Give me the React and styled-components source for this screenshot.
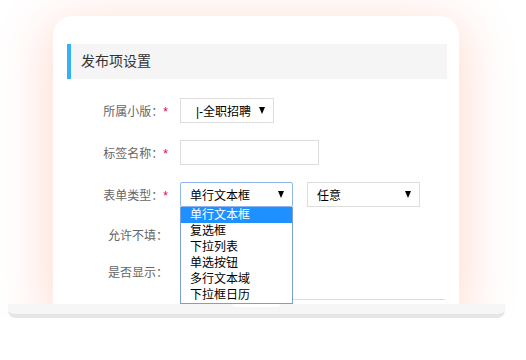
import React from "react";
import styled, { createGlobalStyle } from "styled-components";

const Global = createGlobalStyle`
  html, body {
    margin: 0;
    padding: 0;
    background: #fff;
  }
  body {
    font-family: "Liberation Sans", "Noto Sans CJK SC", sans-serif;
    font-size: 12px;
  }
`;

const types = ["单行文本框", "复选框", "下拉列表", "单选按钮", "多行文本域", "下拉框日历"];

function App() {
  return (
    <>
      <Global />
      <Stage>
        <Card>
          <SectionHeader>发布项设置</SectionHeader>
          <Form>
            <Row $top={18}>
              <Label>所属小版：<Star>*</Star></Label>
              <Select $w={94} $pad={15} $arrow={8}>
                <span>|-全职招聘</span>
                <Arrow />
              </Select>
            </Row>
            <Row $top={16}>
              <Label>标签名称：<Star>*</Star></Label>
              <Input />
            </Row>
            <Row $top={16}>
              <Label>表单类型：<Star>*</Star></Label>
              <SelectWrap>
                <Select $w={113} $pad={9} $arrow={8} $focus>
                  <span>单行文本框</span>
                  <Arrow />
                </Select>
                <DropList>
                  {types.map((t, i) => (
                    <Option key={t} $active={i === 0}>{t}</Option>
                  ))}
                </DropList>
              </SelectWrap>
              <Select $w={113} $pad={9} $arrow={8} $ml={14}>
                <span>任意</span>
                <Arrow />
              </Select>
            </Row>
            <Row $top={14}>
              <Label>允许不填：</Label>
            </Row>
            <Row $top={11}>
              <Label>是否显示：</Label>
            </Row>
            <Divider />
          </Form>
        </Card>
        <Base>
          <Notch />
        </Base>
      </Stage>
    </>
  );
}

export default App;

const Stage = styled.div`
  width: 497px;
  padding: 16px 0 0 8px;
`

const Card = styled.div`
  position: relative;
  margin-left: 45px;
  width: 406px;
  height: 288px;
  box-sizing: border-box;
  padding-top: 28px;
  background: #fff;
  border-radius: 20px 20px 0 0;
  overflow: hidden;
  box-shadow: 0 12px 50px 8px rgba(255, 100, 60, 0.22);
`

const SectionHeader = styled.div`
  margin: 0 12px 0 14px;
  height: 35px;
  line-height: 35px;
  padding-left: 10px;
  background: #f5f5f5;
  border-left: 4px solid #35b1f7;
  color: #333;
  font-size: 14px;
`

const Form = styled.div`
  display: flex;
  flex-direction: column;
`

const Row = styled.div`
  display: flex;
  align-items: center;
  height: 26px;
  margin-top: ${(p) => p.$top}px;
`

const Label = styled.div`
  width: 115px;
  text-align: right;
  color: #666;
  font-size: 12px;
  margin-right: 12px;
  white-space: nowrap;
`

const Star = styled.span`
  color: #e5004f;
`

const Select = styled.div`
  width: ${(p) => p.$w}px;
  height: 25px;
  box-sizing: border-box;
  margin-left: ${(p) => p.$ml || 0}px;
  display: flex;
  align-items: center;
  justify-content: space-between;
  padding: 0 ${(p) => p.$arrow}px 0 ${(p) => p.$pad}px;
  border: 1px solid ${(p) => (p.$focus ? "#8fb5ef" : "#ddd")};
  border-radius: ${(p) => (p.$focus ? "2px" : "0")};
  background: #fff;
  color: #000;
  font-size: 12px;
`

const Arrow = styled.span`
  width: 0;
  height: 0;
  border-left: 3.5px solid transparent;
  border-right: 3.5px solid transparent;
  border-top: 7px solid #000;
`

const Input = styled.div`
  width: 139px;
  height: 25px;
  box-sizing: border-box;
  border: 1px solid #ddd;
`

const SelectWrap = styled.div`
  position: relative;
`

const DropList = styled.div`
  position: absolute;
  top: 100%;
  left: 0;
  width: 113px;
  box-sizing: border-box;
  border: 1px solid #7b9ed8;
  border-top: none;
  background: #fff;
  z-index: 2;
`

const Option = styled.div`
  height: 16px;
  line-height: 16px;
  padding-left: 9px;
  font-size: 12px;
  color: ${(p) => (p.$active ? "#fff" : "#000")};
  background: ${(p) => (p.$active ? "#1e90ff" : "transparent")};
`

const Divider = styled.div`
  margin: 15px 14px 0 127px;
  height: 1px;
  background: #ddd;
`

const Base = styled.div`
  width: 497px;
  height: 10px;
  display: flex;
  justify-content: center;
  background: #f6f6f6;
  border-bottom: 4px solid #e5e5e5;
  border-radius: 0 0 8px 8px;
  box-shadow: 0 24px 26px -4px rgba(255, 100, 60, 0.2);
  position: relative;
  z-index: 3;
`

const Notch = styled.div`
  width: 47px;
  height: 3px;
  background: #fff;
  border-radius: 0 0 6px 6px;
`
